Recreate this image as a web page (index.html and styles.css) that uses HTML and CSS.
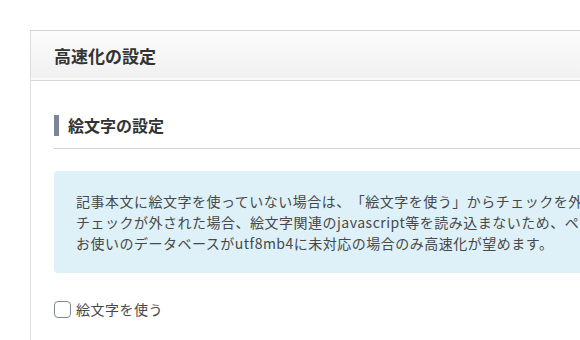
FILE: index.html
```html
<!DOCTYPE html>
<html lang="ja">
<head>
  <meta charset="UTF-8" />
  <meta name="viewport" content="width=device-width, initial-scale=1.0" />
  <title>高速化の設定</title>
  <link rel="stylesheet" href="styles.css">
</head>
<body>

  <div class="panel">
    <div class="panel-head">高速化の設定</div>
    <div class="panel-body">
      <div class="section-title">
        <h3>絵文字の設定</h3>
      </div>

      <div class="info">
        記事本文に絵文字を使っていない場合は、「絵文字を使う」からチェックを外してください。<br>
        チェックが外された場合、絵文字関連のjavascript等を読み込まないため、ページの表示速度が向上します。<br>
        お使いのデータベースがutf8mb4に未対応の場合のみ高速化が望めます。
      </div>

      <label class="check">
        <input type="checkbox" id="useEmoji">
        <span class="box"></span>
        絵文字を使う
      </label>
    </div>
  </div>

</body>
</html>
```

FILE: styles.css
```css
body {
  margin: 0;
  overflow: hidden;
  background: #fff;
  font-family: "Noto Sans CJK JP", "Noto Sans", sans-serif;
  color: #333;
}
.panel {
  margin: 30px 0 0 30px;
  width: 1000px;
  height: 400px;
  border-top: 1px solid #d4d4d4;
  border-left: 1px solid #dcdcdc;
}
.panel-head {
  height: 49px;
  padding-left: 23px;
  display: flex;
  align-items: center;
  font-size: 17px;
  font-weight: bold;
  color: #333;
  background: linear-gradient(#fcfcfc, #f0f0f0);
  border-bottom: 1px solid #d6d6d6;
  box-shadow: inset 0 -2px 0 #fafafa;
}
.panel-body {
  padding: 34px 0 0 23px;
}
.section-title {
  border-bottom: 1px solid #d0d0d0;
  padding-bottom: 12px;
}
.section-title h3 {
  margin: 0;
  border-left: 5px solid #7b8597;
  padding-left: 9px;
  font-size: 16px;
  line-height: 21px;
  color: #333;
}
.info {
  margin-top: 22px;
  padding: 20px 22px 19px;
  background: #dff1f8;
  border-radius: 4px;
  font-size: 14px;
  letter-spacing: 0.5px;
  text-spacing-trim: space-all;
  line-height: 21px;
  color: #484848;
  white-space: nowrap;
}
.check {
  margin-top: 26px;
  display: flex;
  align-items: center;
  gap: 5px;
  font-size: 14px;
  letter-spacing: 0.5px;
  color: #484848;
}
.check input {
  display: none;
}
.check .box {
  width: 15px;
  height: 15px;
  border: 1px solid #808692;
  border-radius: 4px;
  background: #fff;
}
```
